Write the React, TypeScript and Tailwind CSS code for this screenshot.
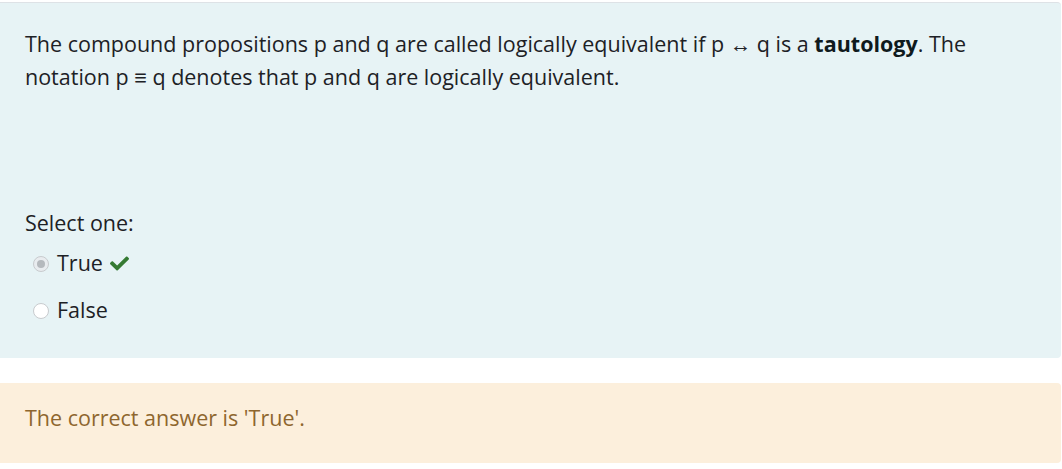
import { FaCheck } from "react-icons/fa";

export default function App() {
  return (
    <div className="w-[1062px] h-[469px] bg-white pt-[2px] font-['Open_Sans',sans-serif] text-[21.5px] text-[#1d2125]">
      {/* question */}
      <div className="h-[356px] w-[1061px] rounded-r-[4px] border-t border-[#dee2e6] bg-[#e7f3f5] px-[25px] pt-[24px]">
        <p className="leading-[33px]">
          The compound propositions p and q are called logically equivalent if p ↔ q is a{" "}
          <b className="font-bold text-[#0f1a1d]">tautology</b>. The notation p ≡ q denotes that p and q are logically
          equivalent.
        </p>

        <div className="mt-[113px] leading-[33px]">Select one:</div>
        <div className="mt-[8px] flex flex-col gap-[14px]">
          <label className="flex h-[33px] items-center pl-[8px]">
            <span className="flex h-[16px] w-[16px] items-center justify-center rounded-full border border-[#c8cbce] bg-[#e9ecef]">
              <span className="h-[8px] w-[8px] rounded-full bg-[#b5b9bd]" />
            </span>
            <span className="ml-[8px]">True</span>
            <FaCheck className="ml-[7px] h-[19px] w-[19px] text-[#357a32]" />
          </label>
          <label className="flex h-[33px] items-center pl-[8px]">
            <span className="h-[16px] w-[16px] rounded-full border border-[#c8cbce] bg-white" />
            <span className="ml-[8px]">False</span>
          </label>
        </div>
      </div>

      {/* feedback */}
      <div className="mt-[25px] h-[80px] w-[1061px] rounded-r-[4px] bg-[#fcefdc] px-[25px] pt-[18px] leading-[33px] text-[#8e662e]">
        The correct answer is 'True'.
      </div>
    </div>
  );
}
